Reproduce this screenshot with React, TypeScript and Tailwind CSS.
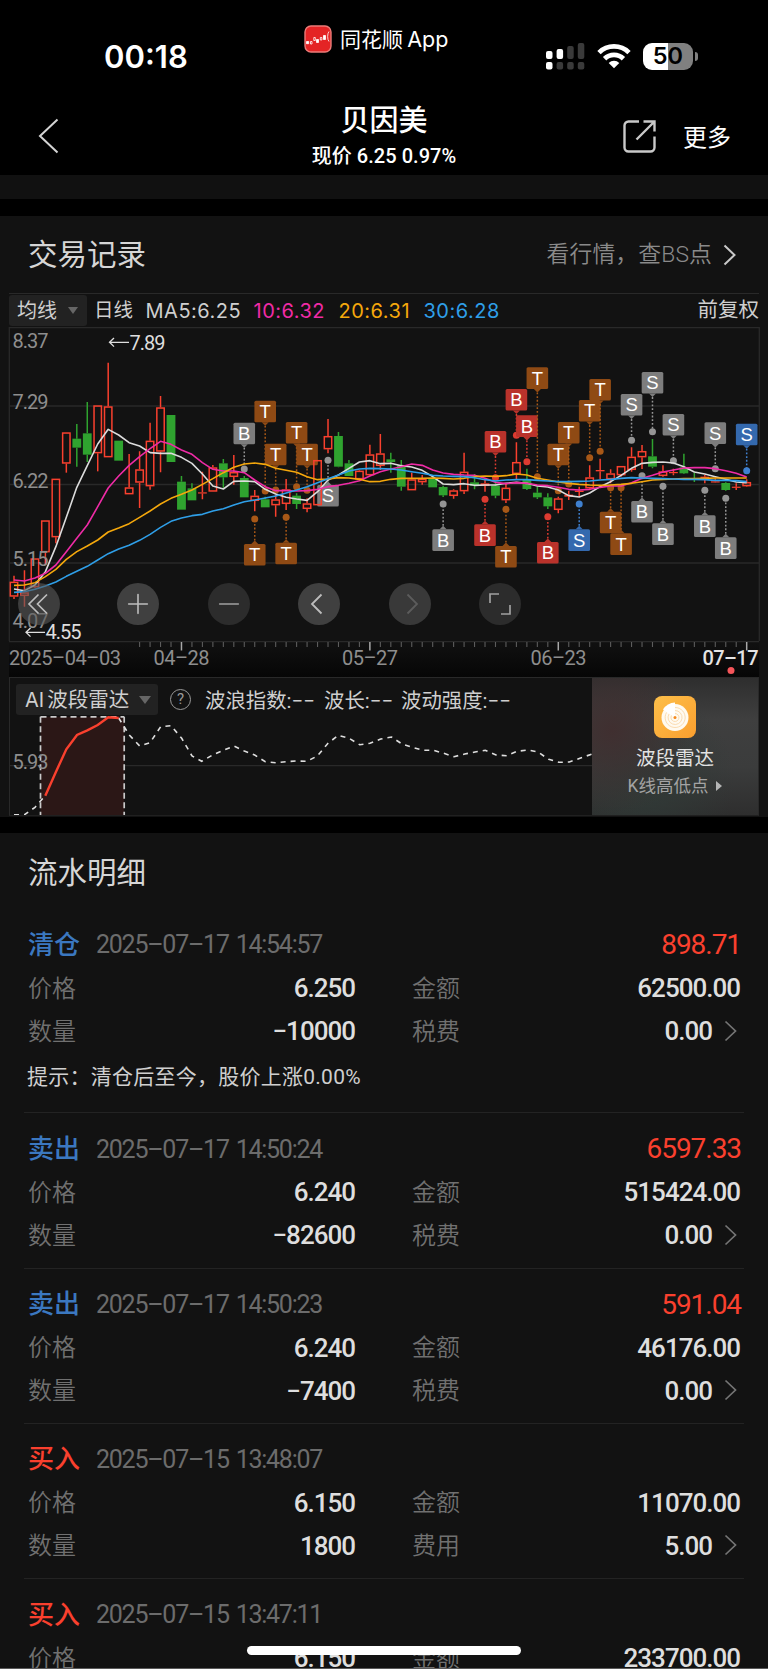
import { Minus, Plus } from "lucide-react";

type Kind = "r" | "g";
type Tone = "gray" | "brown" | "red" | "blue";

const STEP = 10.467;
const candleX = (i: number) => 14 + i * STEP;
// chart rows are stored in thirds of a pixel
const rowY = (v: number) => 320 + v / 3;

// [high, body top, body bottom, low, kind]
const candles: [number, number, number, number, Kind][] = [
  [767, 785, 830, 837, "r"], [751, 817, 828, 860, "r"], [715, 715, 802, 805, "r"], [601, 601, 697, 735, "r"],
  [476, 476, 652, 670, "r"], [337, 337, 431, 458, "r"], [312, 356, 383, 440, "g"], [246, 340, 404, 426, "g"],
  [256, 256, 400, 454, "r"], [128, 259, 412, 412, "r"], [362, 362, 422, 422, "g"], [402, 502, 523, 523, "r"],
  [394, 448, 488, 564, "r"], [308, 362, 499, 509, "r"], [228, 262, 395, 457, "r"], [285, 285, 426, 426, "g"],
  [468, 485, 569, 569, "g"], [490, 505, 541, 541, "g"], [455, 517, 520, 538, "r"], [435, 442, 515, 515, "r"],
  [417, 430, 472, 503, "g"], [405, 456, 471, 494, "r"], [468, 474, 532, 532, "g"], [510, 527, 543, 574, "r"],
  [530, 538, 562, 562, "g"], [525, 538, 556, 590, "r"], [477, 508, 552, 570, "r"], [520, 527, 552, 567, "g"],
  [535, 550, 567, 577, "r"], [420, 420, 556, 556, "r"], [297, 348, 388, 400, "r"], [336, 348, 440, 442, "g"],
  [420, 430, 468, 468, "g"], [450, 452, 478, 478, "r"], [374, 403, 466, 467, "r"], [342, 400, 438, 450, "r"],
  [398, 418, 426, 458, "g"], [420, 436, 500, 512, "g"], [458, 478, 511, 511, "r"], [465, 476, 487, 494, "r"],
  [470, 476, 502, 502, "g"], [497, 501, 526, 531, "g"], [508, 511, 528, 536, "r"], [398, 455, 514, 522, "r"],
  [462, 487, 497, 508, "g"], [478, 490, 498, 515, "r"], [480, 497, 527, 535, "g"], [490, 503, 541, 549, "r"],
  [367, 426, 462, 480, "r"], [446, 478, 507, 510, "g"], [500, 518, 532, 537, "g"], [520, 532, 559, 567, "g"],
  [530, 535, 570, 580, "r"], [512, 524, 530, 540, "r"], [500, 512, 516, 530, "r"], [436, 472, 505, 510, "r"],
  [416, 450, 454, 478, "r"], [448, 460, 478, 490, "r"], [438, 438, 466, 470, "r"], [382, 410, 450, 455, "r"],
  [375, 393, 412, 447, "r"], [357, 409, 440, 445, "g"], [436, 454, 468, 470, "r"], [446, 456, 459, 466, "r"],
  [401, 442, 460, 462, "g"], [458, 474, 476, 486, "g"], [465, 470, 474, 490, "r"], [475, 484, 485, 487, "r"],
  [487, 489, 510, 512, "g"], [490, 500, 503, 510, "r"], [478, 486, 499, 500, "r"],
];

const averages = [
  {
    color: "#dcdcdc",
    rows: [807, 812, 795, 755, 680, 592, 502, 437, 372, 328, 345, 368, 378, 398, 400, 400, 412, 430, 462, 498, 507, 484, 483, 485,
      508, 522, 532, 537, 541, 515, 480, 465, 445, 426, 422, 431, 430, 437, 441, 451, 470, 492, 494, 491, 496, 495, 495, 490,
      487, 490, 498, 501, 510, 527, 531, 519, 500, 485, 466, 445, 430, 427, 426, 429, 440, 456, 462, 470, 478, 486, 488],
  },
  {
    color: "#ef2ba6",
    rows: [780, 783, 774, 760, 735, 695, 655, 615, 560, 504, 468, 436, 410, 386, 364, 373, 390, 403, 428, 448, 453, 453, 458, 480,
      500, 512, 512, 513, 512, 508, 500, 496, 490, 482, 468, 455, 447, 440, 432, 436, 450, 459, 463, 465, 466, 475, 487, 491,
      488, 490, 495, 497, 502, 508, 510, 508, 502, 498, 498, 488, 475, 466, 456, 450, 444, 443, 443, 446, 452, 460, 471],
  },
  {
    color: "#f5a80c",
    rows: [796, 795, 788, 770, 748, 718, 695, 678, 660, 636, 624, 611, 592, 573, 552, 535, 523, 510, 493, 476, 458, 442, 432, 429,
      433, 445, 451, 457, 470, 479, 477, 473, 474, 478, 485, 484, 478, 475, 475, 475, 474, 475, 477, 475, 470, 468, 469, 467,
      462, 465, 475, 480, 486, 490, 493, 495, 496, 495, 493, 490, 485, 480, 478, 477, 476, 476, 475, 474, 474, 474, 474],
  },
  {
    color: "#2f9fe8",
    rows: [817, 815, 808, 798, 786, 769, 754, 739, 720, 701, 687, 676, 661, 643, 622, 604, 594, 587, 583, 573, 566, 555, 545, 540,
      534, 528, 519, 510, 500, 488, 476, 465, 453, 447, 445, 446, 447, 450, 455, 460, 466, 468, 469, 470, 473, 479, 483, 480,
      479, 479, 481, 483, 485, 485, 484, 483, 480, 478, 475, 473, 474, 475, 476, 477, 478, 478, 479, 481, 481, 482, 485],
  },
];

// [candle index, letter, tone, flag top, dot]
const flags: [number, string, Tone, number, number][] = [
  [22, "B", "gray", 308, 447], [23, "T", "brown", 672, 597], [24, "T", "brown", 242, 513], [25, "T", "brown", 371, 510],
  [26, "T", "brown", 668, 592], [27, "T", "brown", 306, 500], [28, "T", "brown", 371, 511], [30, "S", "gray", 495, 421],
  [41, "B", "gray", 628, 552], [45, "B", "red", 613, 538], [46, "B", "red", 333, 473], [47, "T", "brown", 678, 568],
  [48, "B", "red", 207, 346], [49, "B", "red", 286, 425], [50, "T", "brown", 142, 470], [51, "B", "red", 666, 590],
  [52, "T", "brown", 371, 512], [53, "T", "brown", 306, 492], [54, "S", "blue", 628, 552], [55, "T", "brown", 240, 413],
  [56, "T", "brown", 177, 394], [57, "T", "brown", 575, 503], [58, "T", "brown", 640, 503], [59, "S", "gray", 222, 361],
  [60, "B", "gray", 543, 467], [61, "S", "gray", 156, 335], [62, "B", "gray", 610, 499], [63, "S", "gray", 282, 422],
  [66, "B", "gray", 586, 511], [67, "S", "gray", 307, 446], [68, "B", "gray", 652, 535], [70, "S", "blue", 311, 452],
];

const flagFill: Record<Tone, string> = { gray: "#7d7d7d", brown: "#8f4a14", red: "#ba322b", blue: "#3469ae" };
const dotFill: Record<Tone, string> = { gray: "#959595", brown: "#a85817", red: "#dd3b31", blue: "#3f80cf" };

const priceLabels = [
  { y: 348.3, text: "8.37" },
  { y: 409.3, text: "7.29" },
  { y: 487.8, text: "6.22" },
  { y: 566.2, text: "5.15" },
  { y: 627.5, text: "4.07" },
];

const radarHead = "14,814.7 24.5,814.7 35,807.3 45.3,795.7";
const radarRise = "45.3,795.7 56,771.7 66.3,749.3 77,735 87.3,730.3 97.7,725 108.3,717.3 118.7,718";
const radarTail =
  "118.7,718 129.3,735 139.7,746 150,742.7 160.7,726.7 171,725.7 181.7,738.3 192,756 201.7,761.3 213,754.7 223.3,750.3 234,746 244.3,751 254.7,755 265.3,761.7 275.7,762.7 286.3,761.7 296.7,761 307,761.3 317.3,756 328,743.3 338.3,735.3 349,738.3 359.7,744.7 370,743.3 380.7,739 391.5,737 402,744 412.3,747.3 423,750.3 433.3,750.3 443.7,753.3 454,756.7 464.7,754 475,752 485.3,750.3 496,755 506.7,755.7 517,751.3 527.7,750 538,752 548.7,759.3 559,762.3 569.3,762 580,758.3 592,754";

interface Trade {
  side: string;
  time: string;
  profit?: string;
  price: string;
  amount: string;
  qty?: string;
  feeLabel?: string;
  fee?: string;
  hint?: string;
}

const trades: Trade[] = [
  { side: "清仓", time: "2025–07–17 14:54:57", profit: "898.71", price: "6.250", amount: "62500.00", qty: "−10000", feeLabel: "税费", fee: "0.00", hint: "提示：清仓后至今，股价上涨0.00%" },
  { side: "卖出", time: "2025–07–17 14:50:24", profit: "6597.33", price: "6.240", amount: "515424.00", qty: "−82600", feeLabel: "税费", fee: "0.00" },
  { side: "卖出", time: "2025–07–17 14:50:23", profit: "591.04", price: "6.240", amount: "46176.00", qty: "−7400", feeLabel: "税费", fee: "0.00" },
  { side: "买入", time: "2025–07–15 13:48:07", price: "6.150", amount: "11070.00", qty: "1800", feeLabel: "费用", fee: "5.00" },
  { side: "买入", time: "2025–07–15 13:47:11", price: "6.150", amount: "233700.00" },
];

function StatusBar() {
  return (
    <div className="flex h-[96px] items-start pl-[104px] pr-[70px] text-white">
      <div className="mt-[39px] w-[200px] font-['Inter'] text-[31px] leading-9 font-semibold">00:18</div>
      <div className="mt-[24px] flex items-center gap-[8px]">
        <svg className="-mt-[2px]" width="28" height="28" viewBox="0 0 28 28">
          <rect x="1" y="1" width="26" height="26" rx="6" fill="#e42425" stroke="#ec7b78" strokeWidth="1.4" />
          <path d="M2.500 16.500h2.200v2.200H2.500zM12.500 14.500h2v3h-2zM19.500 10.500h2v4h-2z" fill="#fff" stroke="#fff" strokeWidth=".8" />
          <path d="M6.500 16.500h1.500v2.500H6.500zM9.800 12.500h1.500v3H9.800zM16.300 12.500h1.600v2.500h-1.600zM25 6.500c-1.800 2-1.800 8 0 10" fill="none" stroke="#fff" strokeWidth=".8" />
        </svg>
        <span className="-mt-px text-[21px] leading-8 whitespace-nowrap">
          同花顺 <span className="font-['Inter'] text-[21.500px] -ml-[1px]">App</span>
        </span>
      </div>
      <div className="mt-[42px] ml-auto flex items-center gap-[12px]">
        <svg width="40" height="28" viewBox="0 0 40 28">
          <g fill="#fff">
            <rect x="1" y="9" width="6.500" height="8" rx="2" />
            <rect x="11.600" y="7" width="6.500" height="10" rx="2" />
            <rect x="1" y="20" width="6.500" height="7.500" rx="2" />
          </g>
          <g fill="#3a3a3a">
            <rect x="22.200" y="4" width="6.500" height="13" rx="2" />
            <rect x="32.800" y="1" width="6.500" height="16" rx="2" />
            <rect x="11.600" y="20" width="6.500" height="7.500" rx="2" />
            <rect x="22.200" y="20" width="6.500" height="7.500" rx="2" />
            <rect x="32.800" y="20" width="6.500" height="7.500" rx="2" />
          </g>
        </svg>
        <svg width="34" height="26" viewBox="0 0 34 26">
          <g fill="none" stroke="#fff" strokeWidth="4.800">
            <path d="M2 9.600a21.400 21.400 0 0 1 30 0" />
            <path d="M7.600 15.700a13.300 13.300 0 0 1 18.800 0" />
          </g>
          <path d="M11.700 19.900a7.600 7.600 0 0 1 10.600 0L17 25.300z" fill="#fff" />
        </svg>
        <div className="flex items-center gap-[2px]">
          <div className="flex h-[27px] w-[50px] items-center justify-center rounded-[9px] bg-[linear-gradient(90deg,#fff_50%,#808080_50%)] font-['Inter'] text-[23.500px] leading-none font-semibold text-black">
            50
          </div>
          <div className="h-[9px] w-[3px] rounded-r-full bg-[#808080]" />
        </div>
      </div>
    </div>
  );
}

function NavBar() {
  return (
    <div className="grid h-[79px] grid-cols-[1fr_200px_1fr] items-start text-white">
      <svg className="mt-[21px] ml-[38px]" width="22" height="38" viewBox="0 0 22 38" fill="none" stroke="#d4d4d4" strokeWidth="2">
        <path d="M19.500 2.500 2 19l17.500 16.500" />
      </svg>
      <div className="flex flex-col items-center">
        <h1 className="mt-[4px] text-[29px] leading-[42px] font-medium">贝因美</h1>
        <p className="mt-px text-[20px] leading-[26px] font-medium tracking-[0.050px] whitespace-nowrap">现价 6.25 0.97%</p>
      </div>
      <div className="mt-[23px] flex items-start justify-end gap-[27px] pr-[37px]">
        <svg className="mt-px" width="33" height="33" viewBox="0 0 33 33" fill="none" stroke="#c9c9c9" strokeWidth="2.400">
          <path d="M16 1.500H5.500a4 4 0 0 0-4 4v22a4 4 0 0 0 4 4h22a4 4 0 0 0 4-4V16.500M20.500 1.500h11v10M31 2 13.500 19.500" />
        </svg>
        <span className="text-[24px] leading-[38px]">更多</span>
      </div>
    </div>
  );
}

function CandleChart() {
  return (
    <svg className="block" width="768" height="314" viewBox="0 327 768 314">
      <g stroke="#292929" strokeWidth="1.300" fill="none">
        <path d="M9.300 641V327.700H759.300V641" />
        <path d="M9 406H759M9 484.500H759M9 563H759" />
      </g>

      {flags.map(([i, letter, tone, top, dot]) => {
        const x = candleX(i);
        const boxY = rowY(top);
        const dotY = rowY(dot);
        const above = boxY < dotY;
        const edge = above ? boxY + 21.6 : boxY;
        const tip = above ? edge + 3.5 : edge - 3.5;
        return (
          <g key={i}>
            <line x1={x} x2={x} y1={tip} y2={dotY} stroke={dotFill[tone]} strokeWidth="1.500" strokeDasharray="1.800 1.900" />
            <circle cx={x} cy={dotY} r="3.500" fill={dotFill[tone]} />
            <path d={`M${x - 3.5} ${edge}L${x} ${tip}L${x + 3.5} ${edge}z`} fill={flagFill[tone]} />
            <rect x={x - 10.8} y={boxY} width="21.600" height="21.600" rx="1.500" fill={flagFill[tone]} />
            <text x={x} y={boxY + 17.3} textAnchor="middle" fill="#fff" fontSize="18.500" fontFamily="Liberation Sans">
              {letter}
            </text>
          </g>
        );
      })}

      {candles.map(([high, top, bottom, low, kind], i) => {
        const x = candleX(i);
        const color = kind === "r" ? "#f9402e" : "#2fa32f";
        const y = rowY(top);
        const h = Math.max((bottom - top) / 3, 1.2);
        const hollow = kind === "r" && h > 3;
        return (
          <g key={i} stroke={color} strokeWidth="1.500">
            <path d={`M${x} ${rowY(high)}V${y}M${x} ${y + h}V${rowY(low)}`} />
            {hollow ? (
              <rect x={x - 3.7} y={y + 0.7} width="7.400" height={h - 1.4} fill="none" />
            ) : (
              <rect x={x - 4.4} y={y} width="8.800" height={h} fill={color} stroke="none" />
            )}
          </g>
        );
      })}

      {averages.map((line) => (
        <polyline
          key={line.color}
          points={line.rows.map((v, i) => `${candleX(i)},${rowY(v)}`).join(" ")}
          fill="none"
          stroke={line.color}
          strokeWidth="1.600"
          strokeLinejoin="round"
        />
      ))}

      <g fontFamily="Roboto" fontSize="20" fill="#8e8e8e">
        {priceLabels.map((label) => (
          <text key={label.text} x="12.500" y={label.y} textLength="36">
            {label.text}
          </text>
        ))}
      </g>
      <g fontFamily="Roboto" fontSize="20" fill="#dedede">
        <text x="129.500" y="349.800" textLength="36">7.89</text>
        <text x="45.500" y="639" textLength="36">4.55</text>
      </g>
      <path d="M129 342.300H109.500M114 338l-4.500 4.300 4.500 4.300M45 632.300H26M30.500 628l-4.500 4.300 4.500 4.300" fill="none" stroke="#dedede" strokeWidth="1.300" />
    </svg>
  );
}

function ChartControls() {
  const round = "flex size-[42px] items-center justify-center rounded-full";
  return (
    <div className="absolute bottom-[16.500px] left-[17.700px] flex gap-[48.600px] text-[#bdbdbd]">
      <button className={`${round} mr-[8.700px] bg-[#5a5a5a]/60`}>
        <svg width="24" height="24" viewBox="0 0 24 24" fill="none" stroke="currentColor" strokeWidth="1.700">
          <path d="M11.500 2.500 2 12l9.500 9.500M20 2.500 10.500 12l9.500 9.500" />
        </svg>
      </button>
      <button className={`${round} bg-[#404040]`}>
        <Plus size={32} strokeWidth={1.2} />
      </button>
      <button className={`${round} bg-[#2c2c2c] text-[#a0a0a0]`}>
        <Minus size={32} strokeWidth={1.2} />
      </button>
      <button className={`${round} bg-[#404040]`}>
        <svg width="24" height="24" viewBox="0 0 24 24" fill="none" stroke="currentColor" strokeWidth="1.800">
          <path d="M14.500 2.500 5 12l9.500 9.500" />
        </svg>
      </button>
      <button className={`${round} bg-[#393939] text-[#5c5c5c]`}>
        <svg width="24" height="24" viewBox="0 0 24 24" fill="none" stroke="currentColor" strokeWidth="1.800">
          <path d="M9.500 2.500 19 12l-9.500 9.500" />
        </svg>
      </button>
      <button className={`${round} bg-[#2c2c2c] text-[#a0a0a0]`}>
        <svg width="24" height="24" viewBox="0 0 24 24" fill="none" stroke="currentColor" strokeWidth="1.700">
          <path d="M2 11V2H11M22 13v9H13" />
        </svg>
      </button>
    </div>
  );
}

function DateAxis() {
  return (
    <svg className="block" width="768" height="36" viewBox="0 641 768 36">
      <defs>
        <linearGradient id="axis" x1="0" x2="0" y1="0" y2="1">
          <stop offset="0" stopColor="#111" />
          <stop offset="1" stopColor="#060606" />
        </linearGradient>
      </defs>
      <rect x="9" y="641" width="750" height="36" fill="url(#axis)" />
      <path d="M9 641.500H759" stroke="#292929" strokeWidth="1.300" />
      {candles.slice(12).map((_, n) => {
        const i = n + 12;
        const major = (i - 16) % 18 === 0;
        return <path key={i} d={`M${candleX(i)} 642V${major ? 650.5 : 647}`} stroke={major ? "#a8a8a8" : "#5c5c5c"} strokeWidth={major ? 1.5 : 1.1} />;
      })}
      <g fontFamily="Roboto" fontSize="20" fill="#8e8e8e">
        <text x="9" y="665.400" textLength="112">2025–04–03</text>
        <text x="181.500" y="665.400" textAnchor="middle" textLength="56">04–28</text>
        <text x="370" y="665.400" textAnchor="middle" textLength="56">05–27</text>
        <text x="558.500" y="665.400" textAnchor="middle" textLength="56">06–23</text>
        <text x="702.500" y="665.400" textLength="56" fill="#e4e4e4" fontWeight="500">07–17</text>
      </g>
      <circle cx="731" cy="670.500" r="3.500" fill="#f5555a" />
    </svg>
  );
}

function RadarPanel() {
  return (
    <div className="mx-[9px] flex h-[139px] border border-t-[#292929] border-b-[#202020] border-x-[#292929]">
      <div className="flex w-[582px] flex-col text-[20px] text-[#cfcfcf]">
        <div className="flex h-[37px] items-center pl-[6px] pt-[6px] whitespace-nowrap">
          <div className="flex h-[31px] w-[142px] items-center rounded-[3px] bg-[#222] pt-px pl-[9px]">
            <span className="font-['Inter'] text-[20px] mr-[3px]">AI</span>
            <span className="text-[20.500px]">波段雷达</span>
            <span className="ml-[10px] border-x-[6px] border-t-[8px] border-x-transparent border-t-[#666]" />
          </div>
          <div className="ml-[12px] flex size-[21px] items-center justify-center rounded-full border-[1.500px] border-[#999] text-[15px] leading-none text-[#999]">
            ?
          </div>
          <div className="flex pt-[3px] pl-[14px] text-[20.400px]">
            <span className="w-[119px]">波浪指数:−−</span>
            <span className="w-[77px]">波长:−−</span>
            <span>波动强度:−−</span>
          </div>
        </div>
        <svg className="block" width="582" height="100" viewBox="10 715 582 100">
          <path d="M10 765.700H592" stroke="#292929" strokeWidth="1.300" />
          <rect x="40.500" y="716.800" width="83.700" height="110" fill="#2b1716" />
          <path d="M40.500 716.800H124.200" fill="none" stroke="#c9c9c9" strokeWidth="1.700" strokeDasharray="6 4" />
          <path d="M40.500 716.800V816M124.200 716.800V816" fill="none" stroke="#c9c9c9" strokeWidth="1.700" strokeDasharray="6 3.500" />
          <polyline points={radarHead} fill="none" stroke="#dedede" strokeWidth="1.600" strokeDasharray="5 5" />
          <polyline points={radarTail} fill="none" stroke="#dedede" strokeWidth="1.600" strokeDasharray="5 5" />
          <polyline points={radarRise} fill="none" stroke="#fa402e" strokeWidth="2.400" />
          <text x="12.500" y="768.500" textLength="36" fontFamily="Roboto" fontSize="20" fill="#8e8e8e">5.93</text>
        </svg>
      </div>
      <div className="flex flex-1 flex-col items-center bg-[radial-gradient(circle_at_12%_38%,#402f30_0%,transparent_50%),radial-gradient(circle_at_30%_75%,#303a37_0%,transparent_60%),linear-gradient(180deg,#2e2e2e_0%,#3f3f3f_30%,#3b3c3c_65%,#2e2e2e_100%)] pt-[18px]">
        <svg width="42" height="42" viewBox="0 0 42 42">
          <defs>
            <linearGradient id="radar" x1="0" y1="0" x2="1" y2="1">
              <stop offset="0" stopColor="#fdbf4a" />
              <stop offset="1" stopColor="#fb9f2e" />
            </linearGradient>
          </defs>
          <rect width="42" height="42" rx="8" fill="url(#radar)" />
          <circle cx="21" cy="21.500" r="13.500" fill="#fffaf0" />
          <path d="M21 21.500V6.500A15 15 0 0 0 9 13.500z" fill="#fff" />
          <g fill="none" stroke="#fbdcb0" strokeWidth="1">
            <path d="M21 11.500a10 10 0 1 1-8.500 5" />
            <path d="M21 14.500a7 7 0 1 1-6 3.500" />
            <path d="M21 17.500a4 4 0 1 1-3.500 2" />
          </g>
          <circle cx="21" cy="21.500" r="1.500" fill="#f58a1f" />
        </svg>
        <span className="mt-[7px] text-[19.500px] leading-[28px] text-[#e2e2e2]">波段雷达</span>
        <div className="flex items-center gap-[8px] text-[17.500px] leading-[26px] text-[#a3a3a3]">
          K线高低点
          <span className="border-y-[5px] border-l-[6px] border-y-transparent border-l-[#b5b5b5]" />
        </div>
      </div>
    </div>
  );
}

function RecordSection() {
  return (
    <section className="h-[601px] bg-[#121212]">
      <div className="flex h-[77px] items-center justify-between pt-px pr-[30px] pl-[28px]">
        <h2 className="text-[29.500px] text-[#d6d6d6]">交易记录</h2>
        <div className="flex items-center text-[22.800px] font-[350] tracking-[0.150px] text-[#8a8a8a]">
          看行情，查BS点
          <svg className="ml-[10px] mr-px" width="15" height="24" viewBox="0 0 15 24" fill="none" stroke="#c8c8c8" strokeWidth="2">
            <path d="M2.500 2.500 12.500 12l-10 9.500" />
          </svg>
        </div>
      </div>
      <div className="mx-[9px] flex h-[34px] items-center border-t border-[#292929] text-[20px] whitespace-nowrap text-[#cfcfcf]">
        <div className="flex h-[31px] w-[78px] items-center rounded-[3px] bg-[#222] pl-[8px]">
          均线
          <span className="ml-[11px] border-x-[5.500px] border-t-[7px] border-x-transparent border-t-[#666]" />
        </div>
        <span className="ml-[7px] text-[19.500px]">日线</span>
        <div className="ml-[12.500px] flex font-['Inter'] text-[20px] tracking-[0.500px]">
          <span className="w-[108px]">MA5:6.25</span>
          <span className="w-[85px] text-[#ef2ba6]">10:6.32</span>
          <span className="w-[85px] text-[#f5a80c]">20:6.31</span>
          <span className="text-[#2f9fe8]">30:6.28</span>
        </div>
        <span className="ml-auto text-[20.500px]">前复权</span>
      </div>
      <div className="relative">
        <CandleChart />
        <ChartControls />
      </div>
      <DateAxis />
      <RadarPanel />
    </section>
  );
}

function TradeRow({ trade }: { trade: Trade }) {
  const sideColor = trade.side === "买入" ? "text-[#fa402e]" : "text-[#3b78c0]";
  return (
    <div className="mx-[24px] border-b border-[#232323] pt-[14px] pr-[4px] pb-[10.300px] pl-[4px] text-[26px] text-[#dedede]">
      <div className="flex h-[44px] items-center">
        <span className={`w-[68px] text-[26px] font-medium ${sideColor}`}>{trade.side}</span>
        <span className="text-[25px] tracking-[-1.250px] [word-spacing:2px] text-[#6c6c6c]">{trade.time}</span>
        <span className="-mr-px ml-auto text-[28px] font-[450] tracking-[-1.050px] text-[#fa402e]">{trade.profit}</span>
      </div>
      <div className="grid h-[43px] grid-cols-[327px_1fr] items-center gap-x-[57px]">
        <div className="flex items-center justify-between">
          <span className="text-[24px] font-[350] text-[#707070]">价格</span>
          <span className="font-medium tracking-[-1px]">{trade.price}</span>
        </div>
        <div className="flex items-center justify-between">
          <span className="text-[24px] font-[350] text-[#707070]">金额</span>
          <span className="font-medium tracking-[-1px]">{trade.amount}</span>
        </div>
      </div>
      {trade.qty && (
        <div className="grid h-[43px] grid-cols-[327px_1fr] items-center gap-x-[57px]">
          <div className="flex items-center justify-between">
            <span className="text-[24px] font-[350] text-[#707070]">数量</span>
            <span className="font-medium tracking-[-1px]">{trade.qty}</span>
          </div>
          <div className="flex items-center">
            <span className="text-[24px] font-[350] text-[#707070]">{trade.feeLabel}</span>
            <span className="ml-auto font-medium tracking-[-1px]">{trade.fee}</span>
            <svg className="mr-[3px] mb-[2px] ml-[12px]" width="13" height="22" viewBox="0 0 13 22" fill="none" stroke="#757575" strokeWidth="1.700">
              <path d="M1.500 1.500 11.500 11l-10 9.500" />
            </svg>
          </div>
        </div>
      )}
      {trade.hint && <p className="mt-[2px] -ml-px h-[47px] text-[21px] leading-[45px] tracking-[0.250px] text-[#cfcfcf]">{trade.hint}</p>}
    </div>
  );
}

export default function App() {
  return (
    <div className="relative h-[1669px] w-[768px] overflow-hidden bg-black font-['Roboto','Noto_Sans_CJK_SC',sans-serif]">
      <StatusBar />
      <NavBar />
      <div className="h-[24px] bg-[#111]" />
      <div className="h-[17px]" />
      <RecordSection />
      <section className="mt-[16px] h-[836px] bg-[#121212]">
        <h2 className="flex h-[76px] items-center pt-[5px] pl-[28px] text-[29.500px] text-[#d6d6d6]">流水明细</h2>
        {trades.map((trade) => (
          <TradeRow key={trade.time} trade={trade} />
        ))}
      </section>
      <div className="absolute bottom-[14px] left-[247px] h-[9px] w-[274px] rounded-full bg-white" />
      <div className="absolute bottom-0 left-0 h-px w-full bg-[#5a5a5a]" />
    </div>
  );
}
